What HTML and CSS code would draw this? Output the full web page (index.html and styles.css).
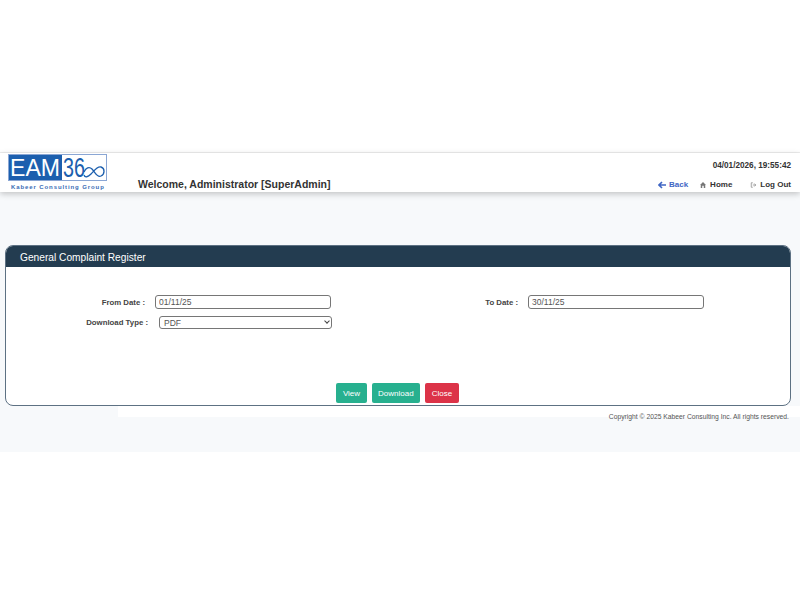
FILE: index.html
```html
<!DOCTYPE html>
<html lang="en">
<head>
  <meta charset="UTF-8" />
  <meta name="viewport" content="width=device-width, initial-scale=1.0" />
  <title>General Complaint Register</title>
  <link rel="stylesheet" href="styles.css">
</head>
<body>
  <div class="app">
    <div class="header">
      <svg class="logo" width="99" height="37" viewBox="0 0 99 37">
        <rect x="0.5" y="0.5" width="98" height="26" fill="#fff" stroke="#8aa6d4"/>
        <rect x="1" y="1" width="53" height="25" fill="#1c5fae"/>
        <text x="2" y="21.5" class="logo-eam" textLength="50" lengthAdjust="spacingAndGlyphs">EAM</text>
        <text x="55" y="23" class="logo-num" textLength="22" lengthAdjust="spacingAndGlyphs">36</text>
        <path d="M76 18c2-4 5-6 8-3s5 9 9 7 4-8 0-9-7 4-10 7-6 4-7 1" fill="none" stroke="#1c5fae" stroke-width="1.3"/>
        <text x="3" y="35" class="logo-sub">Kabeer Consulting Group</text>
      </svg>
      <div class="welcome">Welcome, Administrator [SuperAdmin]</div>
      <div class="header-right">
        <div class="clock">04/01/2026, 19:55:42</div>
        <div class="nav">
          <a class="back"><svg width="8" height="8" viewBox="0 0 8 8"><path d="M4 1 1 4l3 3M1 4h7" fill="none" stroke="#3f66c4" stroke-width="1.6"/></svg>Back</a>
          <a class="home"><svg width="6" height="6" viewBox="0 0 8 8"><path d="M4 0 0 4h1v4h2V5h2v3h2V4h1z" fill="#777"/></svg>Home</a>
          <a><svg width="7" height="6" viewBox="0 0 8 8"><path d="M3 1H1v6h2M3 4h4M5 2l2 2-2 2" fill="none" stroke="#888"/></svg>Log Out</a>
        </div>
      </div>
    </div>

    <div class="panel">
      <div class="panel-title">General Complaint Register</div>
      <div class="panel-body">
        <div class="form-row">
          <div class="field from">
            <label>From Date :</label>
            <input class="text-input" type="text" value="01/11/25">
          </div>
          <div class="field to">
            <label>To Date :</label>
            <input class="text-input" type="text" value="30/11/25">
          </div>
        </div>
        <div class="field type">
          <label>Download Type :</label>
          <div class="select-wrap">
            <select class="select-input"><option>PDF</option></select>
          </div>
        </div>
        <div class="buttons">
          <button class="btn green">View</button>
          <button class="btn green">Download</button>
          <button class="btn red">Close</button>
        </div>
      </div>
    </div>

    <div class="footer"><span>Copyright © 2025 Kabeer Consulting Inc. All rights reserved.</span></div>
  </div>
</body>
</html>
```

FILE: styles.css
```css
body {
  margin: 0;
  background: #fff;
  font-family: "Liberation Sans", Arial, sans-serif;
  color: #333;
}
.app {
  margin-top: 152px;
  height: 300px;
  background: #f7f9fb;
  border-top: 1px solid #eee;
  box-sizing: border-box;
}
.header {
  display: flex;
  align-items: flex-end;
  height: 39px;
  background: #fff;
  box-shadow: 0 2px 6px rgba(0, 0, 0, 0.22);
  padding: 0 9px 0 8px;
}
.logo {
  margin-bottom: 1px;
}
.logo-eam {
  font-size: 24px;
  fill: #fff;
}
.logo-num {
  font-size: 27px;
  fill: #1c5fae;
}
.logo-sub {
  font-size: 6px;
  font-weight: bold;
  letter-spacing: 0.9px;
  fill: #3a6db5;
}
.welcome {
  margin: 0 0 2px 31px;
  font-size: 10.5px;
  font-weight: bold;
  color: #333;
}
.header-right {
  margin-left: auto;
  align-self: stretch;
  text-align: right;
}
.clock {
  margin-top: 8px;
  font-size: 8.2px;
  font-weight: bold;
}
.nav {
  display: flex;
  justify-content: flex-end;
  gap: 18px;
  margin-top: 10px;
  font-size: 8px;
  font-weight: bold;
}
.nav a {
  display: flex;
  align-items: center;
  gap: 3px;
}
.nav .home {
  gap: 4px;
}
.nav .back {
  color: #3f66c4;
  margin-right: -6px;
}
.panel {
  margin: 53px 9px 0 5px;
  height: 161px;
  box-sizing: border-box;
  border: 1px solid #5d7183;
  border-radius: 8px;
  background: #fff;
  overflow: hidden;
}
.panel-title {
  height: 21px;
  padding-left: 14px;
  background: #233c50;
  color: #fff;
  font-size: 10.2px;
  line-height: 23px;
}
.panel-body {
  height: 139px;
}
.form-row {
  display: flex;
  padding-top: 28px;
}
.field {
  display: flex;
  align-items: center;
}
.field label {
  font-size: 7.8px;
  font-weight: bold;
  text-align: right;
  color: #444;
}
.from {
  width: 373px;
}
.from label {
  width: 139px;
}
.to label {
  width: 139px;
}
.text-input {
  box-sizing: border-box;
  width: 176px;
  height: 14px;
  margin-left: 10px;
  padding: 0 3px;
  border: 1px solid #767676;
  border-radius: 3px;
  font-family: inherit;
  font-size: 8.5px;
  color: #555;
}
.type {
  margin-top: 7px;
}
.type label {
  width: 142px;
}
.select-wrap {
  position: relative;
  width: 173px;
  height: 13px;
  margin-left: 11px;
}
.select-wrap::after {
  content: "";
  position: absolute;
  right: 3px;
  top: 3px;
  width: 3px;
  height: 3px;
  border-right: 1px solid #444;
  border-bottom: 1px solid #444;
  transform: rotate(45deg);
}
.select-input {
  appearance: none;
  display: block;
  box-sizing: border-box;
  width: 100%;
  height: 100%;
  padding: 0 4px;
  border: 1px solid #767676;
  border-radius: 3px;
  background: #fff;
  font-family: inherit;
  font-size: 8.5px;
  color: #555;
}
.buttons {
  display: flex;
  justify-content: center;
  gap: 5px;
  margin-top: 54px;
  padding-right: 1px;
}
.btn {
  height: 20px;
  padding: 0 6.5px;
  border: none;
  border-radius: 2px;
  color: #fff;
  font-family: inherit;
  font-size: 8px;
}
.green {
  background: #27b08f;
}
.red {
  background: #dc3348;
}
.footer {
  margin-left: 118px;
  height: 11px;
  padding-right: 11px;
  background: #fff;
  text-align: right;
  font-size: 6.75px;
  line-height: 11px;
  color: #555;
}
.footer span {
  display: block;
  padding-top: 5px;
}
```
